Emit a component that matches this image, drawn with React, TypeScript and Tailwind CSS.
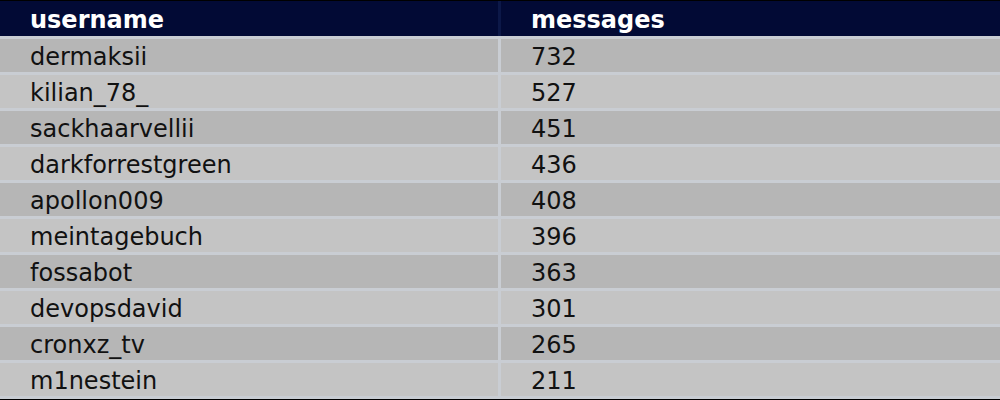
import React from "react";

const rows: [string, number][] = [
  ["dermaksii", 732],
  ["kilian_78_", 527],
  ["sackhaarvellii", 451],
  ["darkforrestgreen", 436],
  ["apollon009", 408],
  ["meintagebuch", 396],
  ["fossabot", 363],
  ["devopsdavid", 301],
  ["cronxz_tv", 265],
  ["m1nestein", 211],
];

export default function App() {
  return (
    <div
      className="w-[1000px] h-[400px] bg-black pt-px overflow-hidden"
      style={{ fontFamily: '"DejaVu Sans", sans-serif' }}
    >
      <div className="grid grid-cols-[501px_1fr] h-[35px] bg-[#020a35] text-white font-bold text-[24px] leading-none">
        <div className="border-r-[3px] border-[#0c1848] pl-[30px] pt-[2px] flex items-center">username</div>
        <div className="pl-[30px] pt-[2px] flex items-center">messages</div>
      </div>
      <div className="border-b-[3px] border-[#c9cdd3]">
        {rows.map(([name, count], i) => (
          <div
            key={name}
            className={`grid grid-cols-[501px_1fr] h-[36px] border-t-[3px] border-[#c9cdd3] text-[24px] leading-none text-[#111111] ${
              i % 2 === 0 ? "bg-[#b6b6b6]" : "bg-[#c4c4c4]"
            }`}
          >
            <div className="border-r-[3px] border-[#c9cdd3] pl-[30px] pt-[2px] flex items-center">{name}</div>
            <div className="pl-[30px] pt-[2px] flex items-center">{count}</div>
          </div>
        ))}
      </div>
    </div>
  );
}
